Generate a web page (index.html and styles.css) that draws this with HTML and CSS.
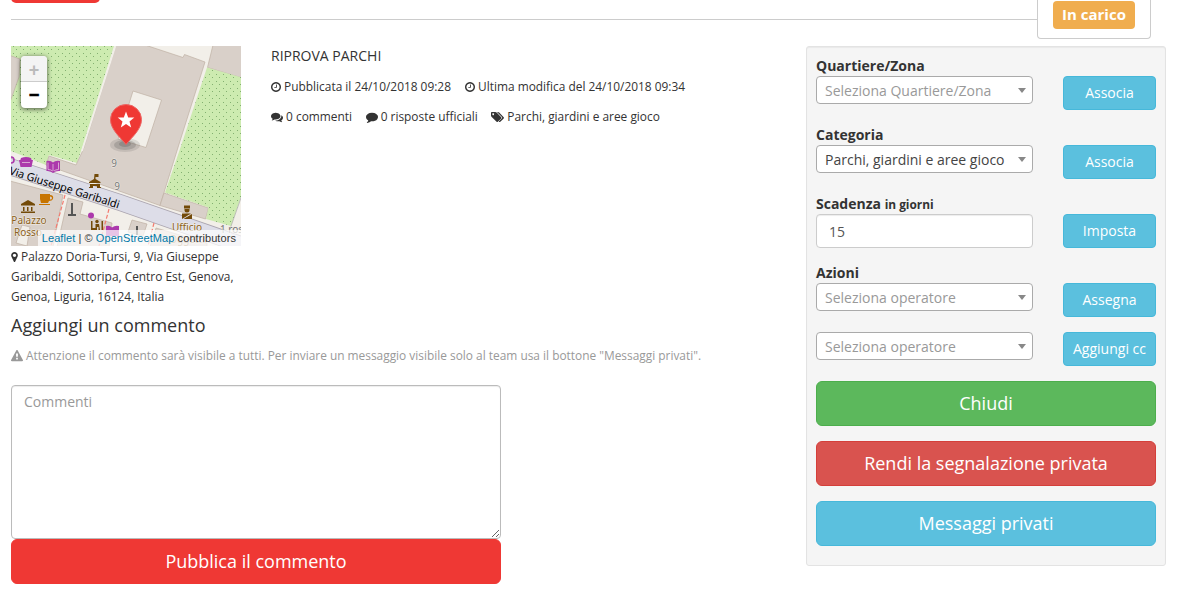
FILE: index.html
```html
<!DOCTYPE html>
<html lang="it">
<head>
<meta charset="utf-8">
<title>Riprova parchi</title>
<link rel="stylesheet" href="styles.css">
</head>
<body>
<svg class="defs" aria-hidden="true">
  <symbol id="clock" viewBox="128 128 1536 1536"><path d="M1024 544v448q0 14-9 23t-23 9h-320q-14 0-23-9t-9-23v-64q0-14 9-23t23-9h224v-352q0-14 9-23t23-9h64q14 0 23 9t9 23zm416 352q0-148-73-273t-198-198-273-73-273 73-198 198-73 273 73 273 198 198 273 73 273-73 198-198 73-273zm224 0q0 209-103 385.5t-279.5 279.5-385.5 103-385.5-103-279.5-279.5-103-385.5 103-385.5 279.5-279.5 385.5-103 385.5 103 279.5 279.5 103 385.5z"/></symbol>
  <symbol id="comments" viewBox="0 0 1792 1792"><path d="M1408 768q0 139-94 257t-256.500 186.500-353.500 68.500q-86 0-176-16-124 88-278 128-36 9-86 16h-3q-11 0-20.500-8t-11.500-21q-1-3-1-6.500t.5-6.500 2-6l2.500-5t3.500-5.500 4-5 4.500-5 4-4.500q5-6 23-25t26-29.500 22.500-29 25-38.500 20.500-44q-124-72-195-177t-71-224q0-139 94-257t256.500-186.500 353.500-68.500 353.500 68.500 256.500 186.500 94 257zm384 256q0 120-71 224.500t-195 176.500q10 24 20.500 44t25 38.500 22.500 29 26 29.500 23 25q1 1 4 4.500t4.500 5 4 5 3.500 5.500l2.500 5t2 6 .5 6.500-1 6.500q-3 14-13 22t-22 7q-50-7-86-16-154-40-278-128-90 16-176 16-271 0-472-132 58 4 88 4 161 0 309-45t264-129q125-92 192-212t67-254q0-77-23-152 129 71 204 178t75 230z"/></symbol>
  <symbol id="comment" viewBox="0 0 1792 1792"><path d="M1792 896q0 174-120 321.500t-326 233-450 85.500q-70 0-145-8-198 175-460 242-49 14-114 22-17 2-30.500-9t-17.500-29v-1q-3-4-.5-12t2-10 4.500-9.500l6-9 7-8.500 8-9q7-8 31-34.500t34.500-38 31-39.500 32.500-51 27-59 26-76q-157-89-247.500-220t-90.500-281q0-130 71-248.500t191-204.500 286-136.500 348-50.500 348 50.500 286 136.500 191 204.500 71 248.500z"/></symbol>
  <symbol id="tags" viewBox="0 0 13 12"><path fill-rule="evenodd" d="M0 1.800Q0 1 .8 1H4.300Q5 1 5.600 1.600L10.200 6.200Q10.700 6.800 10.200 7.400L6.800 10.800Q6.200 11.300 5.600 10.800L.7 5.900Q0 5.200 0 4.500ZM2.200 2.300a.9.9 0 1 0 .01 0Z"/><path d="M6 1h.9Q7.600 1 8.200 1.600l4.500 4.600q.5.600 0 1.200L9.300 10.800q-.7.600-1.300 0l-.3-.3L10.900 7.300q.5-.6 0-1.300Z"/></symbol>
  <symbol id="marker" viewBox="384 128 1024 1536"><path d="M1152 640q0-106-75-181t-181-75-181 75-75 181 75 181 181 75 181-75 75-181zm256 0q0 109-33 179l-364 774q-16 33-47.500 52t-67.500 19-67.500-19-46.500-52l-365-774q-33-70-33-179 0-212 150-362t362-150 362 150 150 362z"/></symbol>
  <symbol id="warning" viewBox="0 0 1792 1792"><path d="M1024 1375v-190q0-14-9.500-23.500t-22.500-9.500h-192q-13 0-22.500 9.500t-9.500 23.500v190q0 14 9.500 23.500t22.500 9.500h192q13 0 22.500-9.500t9.500-23.500zm-2-374l18-459q0-12-10-19-13-11-24-11h-220q-11 0-24 11-10 7-10 21l17 457q0 10 10 16.500t24 6.500h185q14 0 23.500-6.500t10.500-16.500zm-14-934l768 1408q35 63-2 126-17 29-46.500 46t-63.500 17h-1536q-34 0-63.500-17t-46.500-46q-37-63-2-126l768-1408q17-31 47-49t65-18 65 18 47 49z"/></symbol>
</svg>

<div class="page">
  <header class="topbar">
    <span class="top-btn"></span>
    <span class="top-line"></span>
    <div class="tab"><span class="badge">In carico</span></div>
  </header>

  <div class="columns">
    <main class="main">
      <div class="report">
        <div class="place">
          <div class="map">
            <svg class="map-tiles" viewBox="11 46 230 200" width="230" height="200">
              <defs>
                <pattern id="dots" width="14" height="14" patternUnits="userSpaceOnUse" x="11" y="46">
                  <rect width="14" height="14" fill="#cdebb0"/>
                  <g fill="#83b070"><rect x="2" y="0" width="1" height="1"/><rect x="9" y="0" width="1" height="1"/><rect x="5" y="3" width="1" height="1"/><rect x="12" y="3" width="1" height="1"/><rect x="2" y="7" width="1" height="1"/><rect x="9" y="7" width="1" height="1"/><rect x="5" y="10" width="1" height="1"/><rect x="12" y="10" width="1" height="1"/></g>
                </pattern>
              </defs>
              <rect x="11" y="46" width="230" height="200" fill="#f2efe9"/>
              <path fill="url(#dots)" d="M11 46H114L81 151 77 163 49 155 46 165 11 151Z"/>
              <g fill="#d9d0c9" stroke="#bfb0a3" stroke-width=".7">
                <path d="M10 55.500 20 59 19 77 10 102Z"/>
                <path d="M116 45H145L183 57.500 184.500 54.500 205 62 180 141 163.500 194 160 205.500 46 165 49 156 76 165 83 150Z"/>
                <path d="M213 45H242V78L207.500 67.500Z"/>
                <path d="M164 193 208.500 208 205.500 219 160 205.500Z"/>
                <path d="M10 181 63 195 53 247H10Z"/>
                <path d="M68 198 83 202 80 214 112 223 109 247H57Z"/>
                <path d="M132 220 147 224 143 236 128 232Z"/>
                <path d="M156 228 207 243V247H150Z"/>
              </g>
              <path fill="#f2efe9" stroke="#bfb0a3" stroke-width=".7" d="M133 91 161.500 100 146 147.500 118 139ZM22 225 30 227 27 246 16 243Z"/>
              <path d="M115.500 46 82 151" stroke="#f2efe9" stroke-width="1.600"/>
              <path fill="url(#dots)" d="M207 67.500 242 77.500V194L231 226 206 219 208.500 207.500 165 192.500 181 146Z"/>
              <path d="M242 195 230 229" stroke="#aaa" stroke-width=".7"/>
              <path d="M5 165 120 202.500 245 246" stroke="#aaa4af" stroke-width="17" fill="none"/>
              <path d="M5 165 120 202.500 245 246" stroke="#dddde8" stroke-width="15.500" fill="none"/>
              <g stroke="#f47b70" stroke-width="1.200" stroke-dasharray="4 2"><path d="M65 195 51 246M109 209 99 246M154 223 148 246"/></g>
              <!-- points of interest -->
              <g fill="#ac39ac">
                <path d="M21 158q5-2 10 0l1 3-2 2h-8l-2-2ZM19 160h1.500l1.500 3h8l1.500-3H33l-1.500 7h-11Z"/>
                <path d="M46.500 161q4-1 6.500 1.500 2.500-2.500 7-1.500v10q-4-.5-7 2-3-2.500-6.500-2Z"/>
                <path d="M106 226q4-1 6 1.500 3-2.500 7-1.500v10h-13Z"/>
                <circle cx="91" cy="215.500" r="3"/>
              </g>
              <path d="M53 164v7M22 162.500h8M48 162.500v7q3 0 4.500 1.500M58.500 162.500v7q-3 0-4.500 1.500" fill="none" stroke="#e9d3e3" stroke-width=".7"/>
              <circle cx="11" cy="160" r="3" fill="none" stroke="#ac39ac" stroke-width="1.600"/>
              <g fill="#734a08">
                <path d="M21 204 28 200 35 204V205.500H21ZM23 207h1.500v4H23ZM27 207h1.500v4H27ZM31 207h1.500v4H31ZM21 211.500h14v1.500H21Z"/>
                <path d="M94.500 174h4v3h-3v2l5 3v1H89v-1l5-3ZM90 184h10v4h-3v-2h-4v2h-3ZM89 187h4v1h-4ZM97 187h4v1h-4Z"/>
                <path d="M184 205.500h6v3h-6ZM184.500 209h5v1a2.500 2.500 0 0 1-5 0ZM182 213.500h9L182 219ZM183.500 219l8.500-5v5Z"/>
                <path d="M91 221h1.500v7h3v2H91ZM101.500 221h1.500v9h-1.500ZM95.500 224h3.500l1 6h-1.500v-3h-1.500v3h-1.500Z"/><circle cx="97" cy="221.500" r="1.700"/>
              </g>
              <path fill="#c77400" d="M40 194h10v1q4 0 3 4-1 2-4 2l-1 2h-7l-1-4ZM39 204h11v1H39Z"/>
              <path fill="#d9d0c9" d="M50 196.500v3q2 0 2-1.500t-2-1.500Z"/>
              <path fill="#555" d="M71 203h2v11h3v2h-8v-2h3ZM136 226h2v9h-2Z"/>
              <g class="map-label" text-anchor="middle">
                <text x="114" y="167" class="grey">9</text>
                <text x="117" y="190" class="grey">9</text>
                <text x="29" y="224">Palazzo</text><text x="28" y="236">Rosso</text>
                <text x="187" y="231">Ufficio</text><text x="187" y="243" opacity=".7">Oggetti</text>
                <text x="237" y="233" class="grey">1 rosso</text>
              </g>
              <text class="street" transform="translate(8.500 174) rotate(17.500)" textLength="115">Via Giuseppe Garibaldi</text>
              <!-- location pin -->
              <ellipse cx="125" cy="145" rx="15" ry="7" fill="#333" opacity=".12"/>
              <ellipse cx="125" cy="145" rx="11" ry="5" fill="#333" opacity=".18"/>
              <ellipse cx="125" cy="144" rx="6" ry="3" fill="#333" opacity=".2"/>
              <path fill="#ef3834" stroke="#ed6664" d="M126 144.500C120 137 110.500 129.500 110.500 119.500A15.500 15 0 0 1 141.500 119.500C141.500 129.500 132 137 126 144.500Z"/>
              <path fill="#fff" d="M126 111.500l2.200 5.900 6.100.2-4.800 3.900 1.700 6-5.200-3.500-5.200 3.500 1.700-6-4.800-3.900 6.100-.2Z"/>
            </svg>
            <div class="zoom"><span class="zoom-in">+</span><span class="zoom-out">−</span></div>
            <div class="credit"><a>Leaflet</a> | © <a>OpenStreetMap</a> contributors</div>
          </div>
          <p class="address"><svg class="ico ico-pin"><use href="#marker"/></svg> Palazzo Doria-Tursi, 9, Via Giuseppe Garibaldi, Sottoripa, Centro Est, Genova, Genoa, Liguria, 16124, Italia</p>
        </div>
        <div class="info">
          <p class="title">RIPROVA PARCHI</p>
          <ul class="meta">
            <li><svg class="ico ico-clock"><use href="#clock"/></svg> Pubblicata il 24/10/2018 09:28</li>
            <li><svg class="ico ico-clock"><use href="#clock"/></svg> Ultima modifica del 24/10/2018 09:34</li>
          </ul>
          <ul class="meta">
            <li><svg class="ico"><use href="#comments"/></svg> 0 commenti</li>
            <li><svg class="ico"><use href="#comment"/></svg> 0 risposte ufficiali</li>
            <li><svg class="ico ico-tags"><use href="#tags"/></svg> Parchi, giardini e aree gioco</li>
          </ul>
        </div>
      </div>
      <h4 class="comment-title">Aggiungi un commento</h4>
      <p class="notice"><svg class="ico"><use href="#warning"/></svg> Attenzione il commento sarà visibile a tutti. Per inviare un messaggio visibile solo al team usa il bottone "Messaggi privati".</p>
      <form class="comment-form">
        <textarea class="comment-box" placeholder="Commenti"></textarea>
        <button type="button" class="btn btn-lg btn-brand">Pubblica il commento</button>
      </form>
    </main>

    <aside class="panel">
      <div class="label">Quartiere/Zona</div>
      <div class="row"><div class="select muted">Seleziona Quartiere/Zona</div><button class="btn btn-info">Associa</button></div>
      <div class="label">Categoria</div>
      <div class="row"><div class="select">Parchi, giardini e aree gioco</div><button class="btn btn-info">Associa</button></div>
      <div class="label">Scadenza <small>in giorni</small></div>
      <div class="row"><input class="field" value="15"><button class="btn btn-info">Imposta</button></div>
      <div class="label">Azioni</div>
      <div class="row"><div class="select muted">Seleziona operatore</div><button class="btn btn-info">Assegna</button></div>
      <div class="row"><div class="select muted">Seleziona operatore</div><button class="btn btn-info">Aggiungi cc</button></div>
      <button class="btn btn-lg btn-success">Chiudi</button>
      <button class="btn btn-lg btn-danger">Rendi la segnalazione privata</button>
      <button class="btn btn-lg btn-info">Messaggi privati</button>
    </aside>
  </div>
</div>
</body>
</html>
```

FILE: styles.css
```css
* { box-sizing: border-box; }
body { margin: 0; background: #fff; color: #333; font: 14px/20px "Open Sans", sans-serif; overflow: hidden; }
p, h4, ul { margin: 0; padding: 0; }
.defs { display: none; }
.page { width: 1181px; height: 603px; padding: 0 15px 0 11px; overflow: hidden; }

.topbar { display: grid; grid-template-columns: 1026px 114px; height: 46px; position: relative; }
.top-btn { position: absolute; left: 0; top: -17px; width: 89px; height: 20px; border-radius: 5px; background: #ef3834; }
.top-line { height: 20px; border-bottom: 1px solid #ccc; }
.tab { height: 39px; padding-top: 1px; border: 1px solid #ccc; border-top: 0; border-radius: 0 0 4px 4px; text-align: center; }
.badge { display: block; width: 82px; height: 28px; margin: 0 auto; border-radius: 4px; background: #f0ad4e; color: #fff; font-size: 15px; font-weight: 700; line-height: 27px; }

.columns { display: flex; justify-content: space-between; align-items: flex-start; width: 1155px; }
.main { width: 750px; }
.report { display: flex; gap: 30px; height: 261px; }
.place { width: 230px; }
.address { font-size: 11.9px; }
.ico { width: 12px; height: 12px; fill: currentColor; vertical-align: -2px; }
.ico-clock { width: 10px; height: 10px; vertical-align: -1px; }
.ico-pin { width: 7px; height: 10px; vertical-align: -1px; }
.ico-tags { width: 13px; }
.title { height: 30px; }
.meta { display: flex; gap: 14px; height: 30px; font-size: 11.9px; list-style: none; white-space: nowrap; }
.meta + .meta { gap: 13.5px; }

.map { position: relative; height: 200px; overflow: hidden; }
.map-tiles { display: block; }
.map-label { font: 10px "Noto Sans", sans-serif; fill: #8a6020; paint-order: stroke; stroke: #f2eee8; stroke-width: 1px; }
.grey { fill: #777; }
.street { font: 11px "Noto Sans", sans-serif; fill: #000; paint-order: stroke; stroke: #dddde8; stroke-width: 1px; }
.zoom { position: absolute; left: 10px; top: 10px; width: 26px; border-radius: 4px; background: #fff; box-shadow: 0 1px 5px rgba(0,0,0,.65); font: bold 18px/28px "Liberation Sans", sans-serif; text-align: center; }
.zoom span { display: block; height: 26px; }
.zoom .zoom-in { border-bottom: 1px solid #ccc; border-radius: 4px 4px 0 0; background: #f4f4f4; color: #bbb; }
.zoom .zoom-out { color: #000; -webkit-text-stroke: .5px #000; line-height: 27px; }
.credit { position: absolute; right: 0; bottom: 0; height: 16px; padding: 0 5px 0 4px; background: rgba(255,255,255,.7); font: 11px/16px "Liberation Sans", sans-serif; letter-spacing: .075px; white-space: nowrap; }
.credit a { color: #0078a8; }

.comment-title { height: 29px; padding-top: 8px; font-size: 18px; font-weight: 400; line-height: 20px; }
.notice { margin-top: 9px; color: #999; font-size: 11.9px; white-space: nowrap; }
.comment-form { display: flex; flex-direction: column; width: 490px; margin-top: 20px; }
.comment-box { height: 154px; padding: 6px 12px; border: 1px solid #bbb; border-radius: 4px; box-shadow: inset 0 1px 1px rgba(0,0,0,.075); font: inherit; resize: both; }
.comment-box::placeholder { color: #999; }

.panel { display: flex; flex-direction: column; width: 360px; height: 520px; padding: 9px; border: 1px solid #e3e3e3; border-radius: 3px; background: #f5f5f5; box-shadow: inset 0 1px 1px rgba(0,0,0,.05); }
.label { height: 20px; font-weight: 700; }
.label small { font-size: 11.9px; }
.row { display: grid; grid-template-columns: 217px 93px; gap: 30px; height: 34px; margin-bottom: 15px; align-items: start; }
.select { position: relative; height: 28px; padding-left: 8px; border: 1px solid #aaa; border-radius: 4px; background: #fff; color: #444; line-height: 28px; white-space: nowrap; }
.select::after { content: ""; position: absolute; right: 6px; top: 11px; border: 4px solid transparent; border-top: 5px solid #888; border-bottom: 0; }
.select.muted { color: #999; }
.field { width: 217px; height: 34px; padding: 6px 12px; border: 1px solid #ccc; border-radius: 4px; background: #fff; box-shadow: inset 0 1px 1px rgba(0,0,0,.075); color: #555; font: inherit; }
.btn { height: 34px; padding: 0; border: 1px solid; border-radius: 4px; color: #fff; font: 14px/20px "Open Sans", sans-serif; white-space: nowrap; }
.btn-lg { flex: none; height: 45px; margin-bottom: 15px; padding-bottom: 2px; border-radius: 6px; font-size: 18px; line-height: 24px; }
.btn-info { background: #5bc0de; border-color: #46b8da; }
.btn-success { background: #5cb85c; border-color: #4cae4c; }
.btn-danger { background: #d9534f; border-color: #d43f3a; }
.btn-brand { margin: 0; background: #ef3834; border-color: #ef3834; }
```
